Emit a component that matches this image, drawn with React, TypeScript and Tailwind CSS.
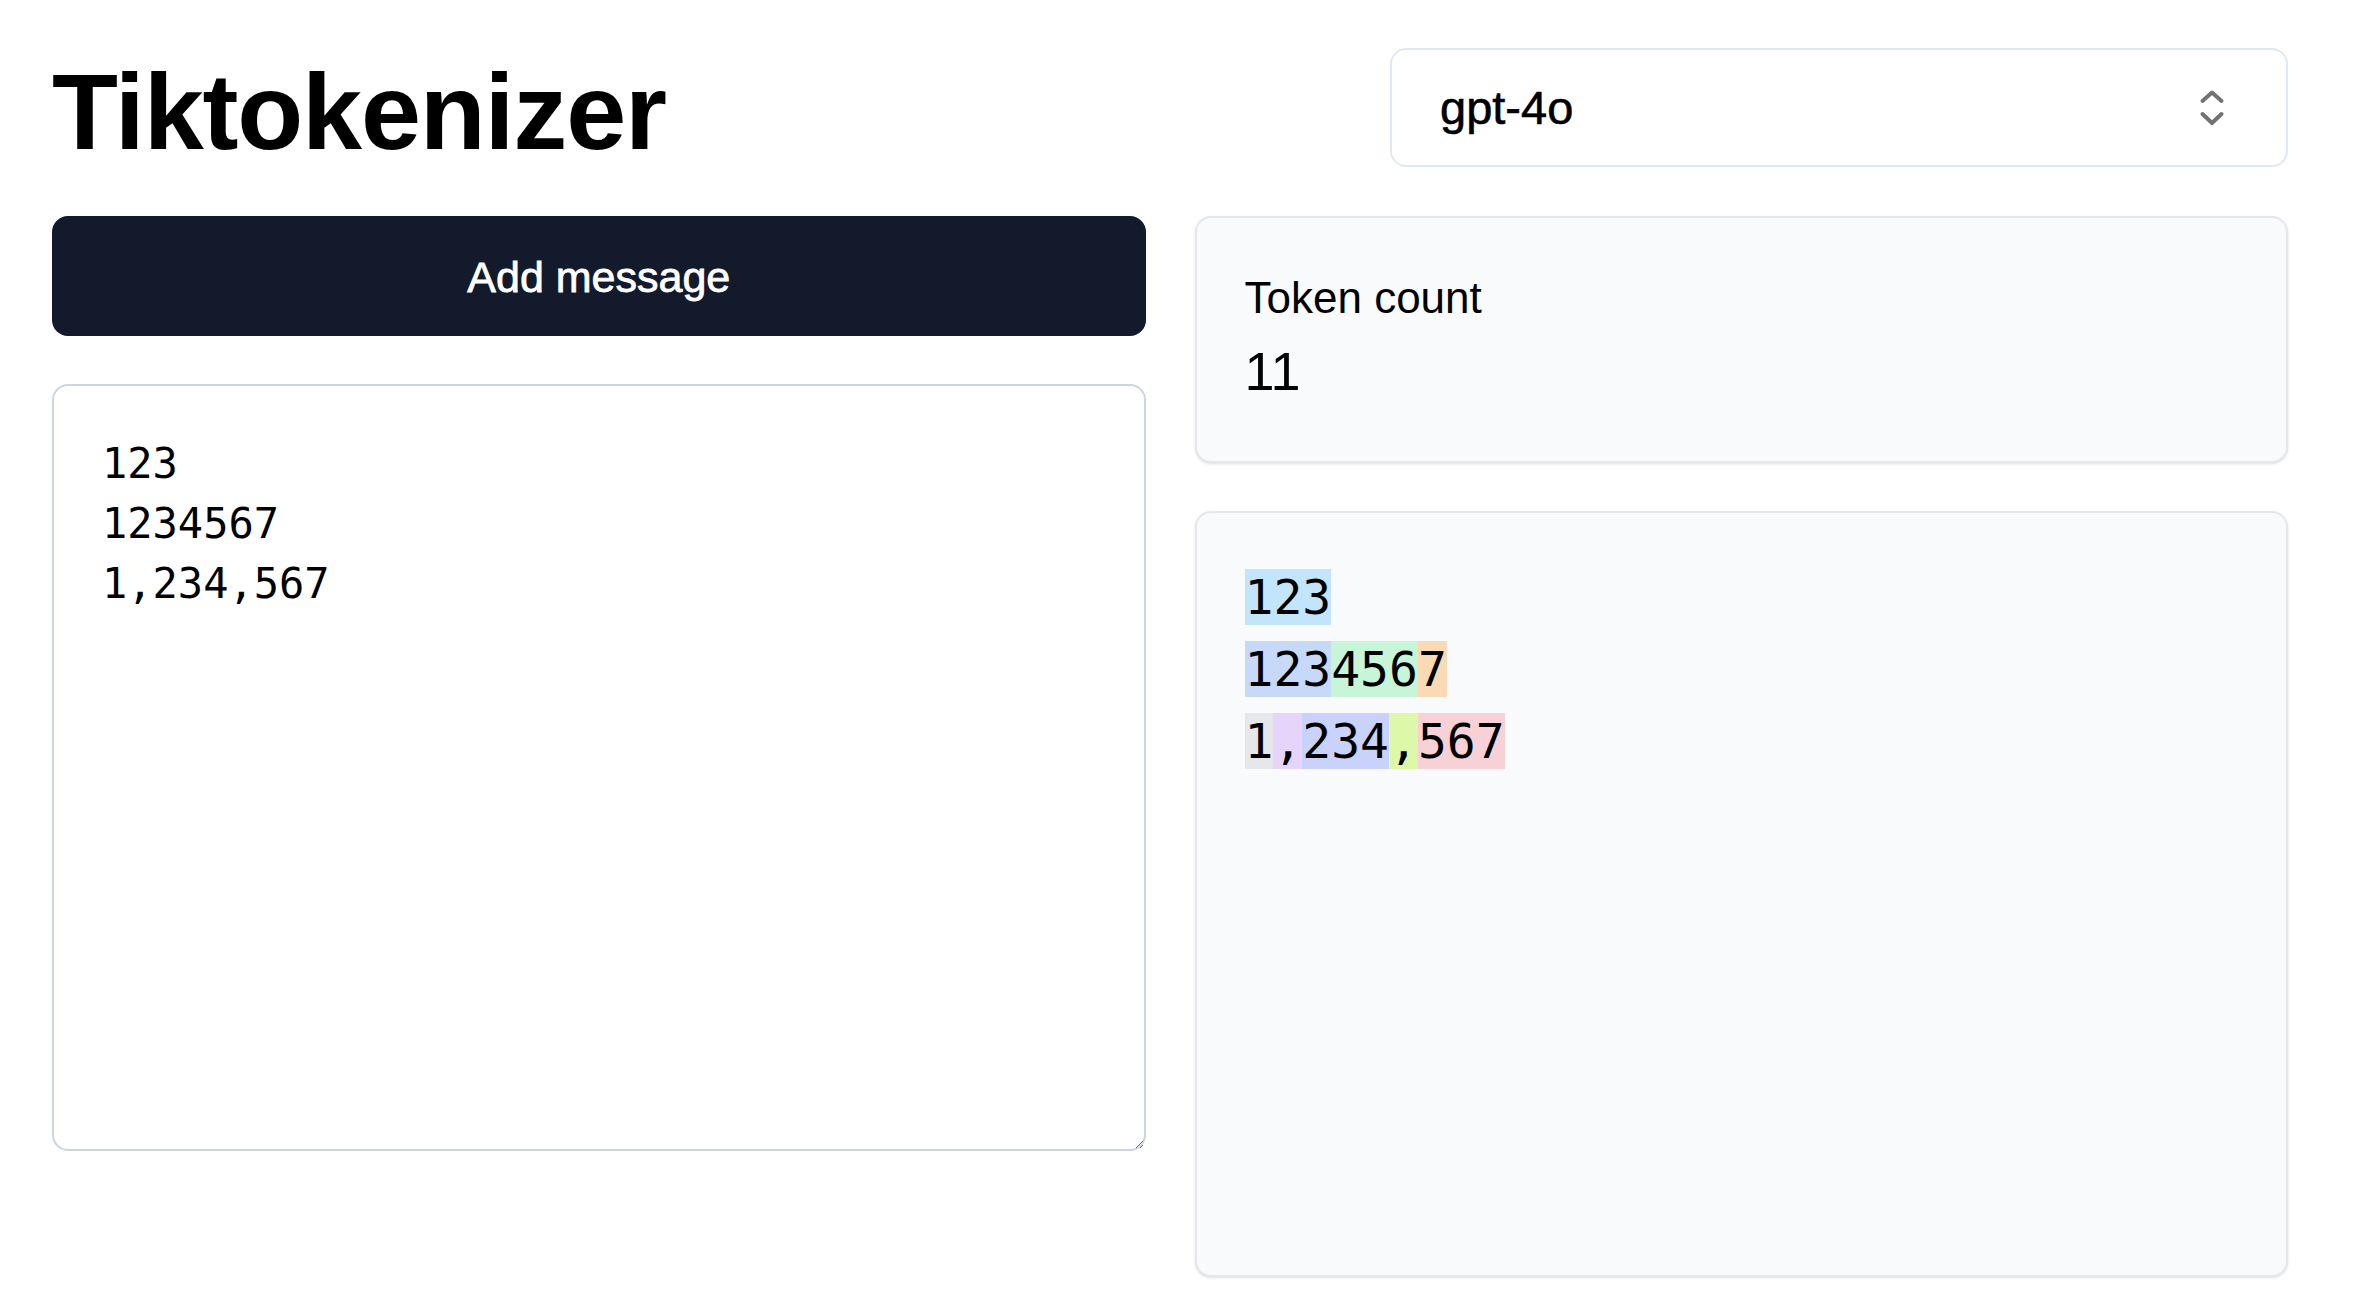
import React from 'react';

const sans = { fontFamily: '"Liberation Sans", Arial, sans-serif' };

const tokens: { text: string; color: string }[] = [
  { text: '123', color: 'bg-[#c3e5fb]' },
  { text: '\n', color: '' },
  { text: '123', color: 'bg-[#c6d9f9]' },
  { text: '456', color: 'bg-[#c7f5d8]' },
  { text: '7', color: 'bg-[#f9dab5]' },
  { text: '\n', color: '' },
  { text: '1', color: 'bg-[#e5e7eb]' },
  { text: ',', color: 'bg-[#e6d4fa]' },
  { text: '234', color: 'bg-[#c9d2fb]' },
  { text: ',', color: 'bg-[#dcf8a8]' },
  { text: '567', color: 'bg-[#f7d1d6]' },
];

function ChevronsUpDown() {
  return (
    <svg width="28" height="40" viewBox="0 0 28 40" fill="none" stroke="#737373" strokeWidth="4" strokeLinecap="round" strokeLinejoin="round">
      <path d="M4.5 13 L14 4.5 L23.5 13" />
      <path d="M4.5 26 L14 35 L23.5 26" />
    </svg>
  );
}

export default function App() {
  return (
    <div className="min-h-screen bg-white pl-[52px] pr-[68px] pt-[48px] text-black" style={sans}>
      {/* Header */}
      <header className="flex items-center justify-between">
        <h1 className="pt-[8px] text-[108px] font-bold leading-none tracking-[-1.2px]">Tiktokenizer</h1>
        <div className="flex h-[119px] w-[898px] items-center justify-between rounded-[16px] border-2 border-[#e2e8f0] bg-white pl-[48px] pr-[60px]">
          <span className="pt-[2px] text-[47px] [-webkit-text-stroke:0.6px_black]">gpt-4o</span>
          <ChevronsUpDown />
        </div>
      </header>

      <div className="mt-[49px] grid grid-cols-2 gap-x-[49px]">
        {/* Left — input */}
        <section className="flex flex-col gap-[48px]">
          <button className="h-[120px] w-full rounded-[16px] bg-[#131a2b] pt-[2px] text-[43px] font-medium text-white [-webkit-text-stroke:0.8px_white]">
            Add message
          </button>
          <textarea
            defaultValue={'123\n1234567\n1,234,567'}
            spellCheck={false}
            className="h-[767px] w-full resize-y rounded-[16px] border-2 border-[#cbd5e1] bg-white p-[48px] text-[42px] leading-[60px] text-black outline-none"
            style={{ fontFamily: '"DejaVu Sans Mono", monospace' }}
          />
        </section>

        {/* Right — results */}
        <section className="flex flex-col gap-[48px]">
          <div className="rounded-[16px] border-2 border-[#e5e7eb] bg-[#f8fafc] p-[48px] shadow-sm">
            <div className="text-[44px] leading-[64px]">Token count</div>
            <div className="text-[54px] leading-[83px]">11</div>
          </div>
          <div className="h-[766px] rounded-[16px] border-2 border-[#e5e7eb] bg-[#f8fafc] p-[48px] shadow-sm">
            <pre
              className="whitespace-pre-wrap text-[48px] leading-[72px]"
              style={{ fontFamily: '"DejaVu Sans Mono", monospace' }}
            >
              {tokens.map((t, i) => (
                <span key={i} className={t.color}>
                  {t.text}
                </span>
              ))}
            </pre>
          </div>
        </section>
      </div>
    </div>
  );
}
